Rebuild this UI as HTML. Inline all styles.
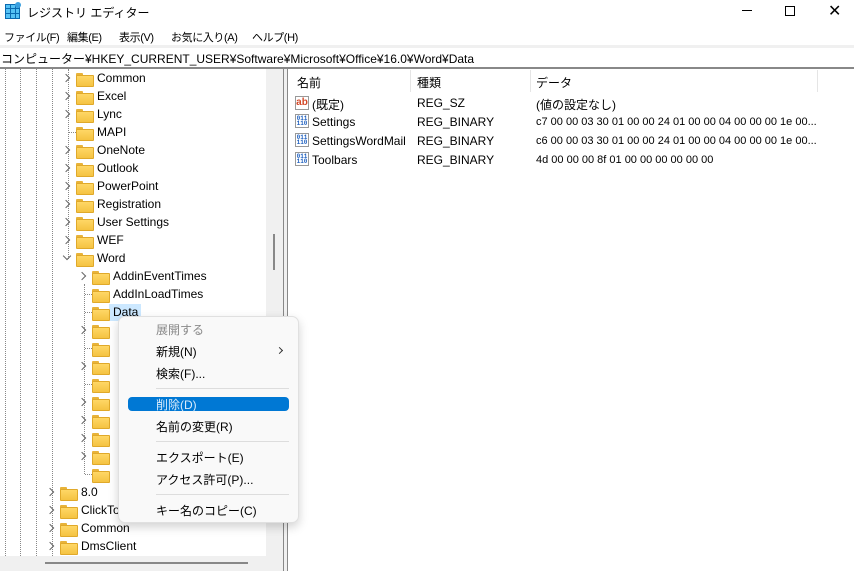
<!DOCTYPE html>
<html><head><meta charset="utf-8"><style>
*{margin:0;padding:0;box-sizing:border-box}
body{width:854px;height:571px;overflow:hidden;background:#fff;font-family:"Liberation Sans","Noto Sans CJK JP",sans-serif;font-size:12px;color:#000;position:relative}
.a{position:absolute;white-space:nowrap}
.mn{position:absolute;white-space:nowrap;font-size:11px;letter-spacing:-0.4px;top:29px}
.f{position:absolute;width:16px;height:12px}
.f:before{content:"";position:absolute;left:0;top:0;width:7px;height:3px;background:#e8b33a;border-radius:1px 1px 0 0}
.f:after{content:"";position:absolute;left:0;top:2px;width:16px;height:10px;background:linear-gradient(#ffd766,#f5c342);border:1px solid #e0a92a;border-radius:1px}
.c{position:absolute;width:6px;height:6px;border-right:1.5px solid #666;border-bottom:1.5px solid #666;transform:rotate(-45deg)}
.cd{transform:rotate(45deg)}
.v{position:absolute;top:69px;height:487px;border-left:1px dotted #888}
.m{position:absolute;left:156px;font-size:12px}
.sep{position:absolute;left:156px;width:133px;height:1px;background:#ddd}
.bi{position:absolute;width:14px;height:14px;border:1px solid #999;background:#fff;font:bold 6px/5px "Liberation Mono",monospace;color:#1d5fbf;text-align:center;padding-top:1px}
</style></head><body>
<!-- title -->
<div class="a" style="left:5px;top:4px;width:15px;height:15px;background:#1e8fd8;border:1px solid #0a6ab0"></div>
<div class="a" style="left:6px;top:5px;width:13px;height:13px;background:repeating-linear-gradient(90deg,transparent 0 4px,#0a6ab0 4px 5px),repeating-linear-gradient(0deg,#55c2f5 0 4px,#0a6ab0 4px 5px)"></div>
<div class="a" style="left:15px;top:2px;width:6px;height:6px;background:#3aa0e0;border-radius:50%"></div>
<div class="a" style="left:27px;top:4px;font-size:12px">レジストリ エディター</div>
<div class="a" style="left:742px;top:10px;width:10px;height:1px;background:#000"></div>
<div class="a" style="left:785px;top:6px;width:10px;height:10px;border:1px solid #000"></div>
<div class="a" style="left:828px;top:1px;font-size:16px;font-weight:300">✕</div>
<!-- menu -->
<div class="mn" style="left:4px">ファイル(F)</div>
<div class="mn" style="left:67px">編集(E)</div>
<div class="mn" style="left:119px">表示(V)</div>
<div class="mn" style="left:171px">お気に入り(A)</div>
<div class="mn" style="left:252px">ヘルプ(H)</div>
<div class="a" style="left:0;top:45px;width:854px;height:3px;background:#f0f0f0"></div>
<div class="a" style="left:1px;top:50px">コンピューター¥HKEY_CURRENT_USER¥Software¥Microsoft¥Office¥16.0¥Word¥Data</div>
<div class="a" style="left:0;top:67px;width:854px;height:2px;background:#888"></div>
<!-- tree bg & scrollbars -->
<div class="a" style="left:266px;top:69px;width:17px;height:502px;background:#f0f0f0"></div>
<div class="a" style="left:273px;top:234px;width:2px;height:36px;background:#888"></div>
<div class="a" style="left:0;top:556px;width:283px;height:15px;background:#f0f0f0"></div>
<div class="a" style="left:45px;top:562px;width:203px;height:2px;background:#888"></div>
<div class="a" style="left:283px;top:69px;width:1px;height:502px;background:#888"></div>
<div class="a" style="left:284px;top:69px;width:3px;height:502px;background:#f0f0f0"></div>
<div class="a" style="left:287px;top:69px;width:1px;height:502px;background:#888"></div>
<div class="v" style="left:5px"></div><div class="v" style="left:20px"></div><div class="v" style="left:36px"></div><div class="v" style="left:52px"></div>
<div class="v" style="left:68px;height:190px"></div>
<div class="a" style="left:84px;top:284px;height:190px;border-left:1px dotted #888"></div>
<div class="a" style="left:69px;top:132px;width:7px;border-top:1px dotted #888"></div>
<div class="a" style="left:85px;top:294px;width:7px;border-top:1px dotted #888"></div>
<div class="a" style="left:85px;top:312px;width:7px;border-top:1px dotted #888"></div>
<div class="a" style="left:85px;top:348px;width:7px;border-top:1px dotted #888"></div>
<div class="a" style="left:85px;top:384px;width:7px;border-top:1px dotted #888"></div>
<div class="a" style="left:85px;top:474px;width:7px;border-top:1px dotted #888"></div>
<div class="a" style="left:109px;top:304px;width:32px;height:17px;background:#cce8ff"></div>

<!-- level office children -->
<div class="c" style="left:63px;top:75px"></div><div class="f" style="left:76px;top:73px"></div><div class="a" style="left:97px;top:71px">Common</div>
<div class="c" style="left:63px;top:93px"></div><div class="f" style="left:76px;top:91px"></div><div class="a" style="left:97px;top:89px">Excel</div>
<div class="c" style="left:63px;top:111px"></div><div class="f" style="left:76px;top:109px"></div><div class="a" style="left:97px;top:107px">Lync</div>
<div class="f" style="left:76px;top:127px"></div><div class="a" style="left:97px;top:125px">MAPI</div>
<div class="c" style="left:63px;top:147px"></div><div class="f" style="left:76px;top:145px"></div><div class="a" style="left:97px;top:143px">OneNote</div>
<div class="c" style="left:63px;top:165px"></div><div class="f" style="left:76px;top:163px"></div><div class="a" style="left:97px;top:161px">Outlook</div>
<div class="c" style="left:63px;top:183px"></div><div class="f" style="left:76px;top:181px"></div><div class="a" style="left:97px;top:179px">PowerPoint</div>
<div class="c" style="left:63px;top:201px"></div><div class="f" style="left:76px;top:199px"></div><div class="a" style="left:97px;top:197px">Registration</div>
<div class="c" style="left:63px;top:219px"></div><div class="f" style="left:76px;top:217px"></div><div class="a" style="left:97px;top:215px">User Settings</div>
<div class="c" style="left:63px;top:237px"></div><div class="f" style="left:76px;top:235px"></div><div class="a" style="left:97px;top:233px">WEF</div>
<div class="c cd" style="left:64px;top:253px"></div><div class="f" style="left:76px;top:253px"></div><div class="a" style="left:97px;top:251px">Word</div>
<!-- word children -->
<div class="c" style="left:79px;top:273px"></div><div class="f" style="left:92px;top:271px"></div><div class="a" style="left:113px;top:269px">AddinEventTimes</div>
<div class="f" style="left:92px;top:289px"></div><div class="a" style="left:113px;top:287px">AddInLoadTimes</div>
<div class="f" style="left:92px;top:307px"></div><div class="a" style="left:113px;top:305px">Data</div>
<div class="c" style="left:79px;top:327px"></div><div class="f" style="left:92px;top:325px"></div>
<div class="f" style="left:92px;top:343px"></div>
<div class="c" style="left:79px;top:363px"></div><div class="f" style="left:92px;top:361px"></div>
<div class="f" style="left:92px;top:379px"></div>
<div class="c" style="left:79px;top:399px"></div><div class="f" style="left:92px;top:397px"></div>
<div class="c" style="left:79px;top:417px"></div><div class="f" style="left:92px;top:415px"></div>
<div class="c" style="left:79px;top:435px"></div><div class="f" style="left:92px;top:433px"></div>
<div class="c" style="left:79px;top:453px"></div><div class="f" style="left:92px;top:451px"></div>
<div class="f" style="left:92px;top:469px"></div>
<!-- lower -->
<div class="c" style="left:47px;top:489px"></div><div class="f" style="left:60px;top:487px"></div><div class="a" style="left:81px;top:485px">8.0</div>
<div class="c" style="left:47px;top:507px"></div><div class="f" style="left:60px;top:505px"></div><div class="a" style="left:81px;top:503px">ClickTo</div>
<div class="c" style="left:47px;top:525px"></div><div class="f" style="left:60px;top:523px"></div><div class="a" style="left:81px;top:521px">Common</div>
<div class="c" style="left:47px;top:543px"></div><div class="f" style="left:60px;top:541px"></div><div class="a" style="left:81px;top:539px">DmsClient</div>

<!-- right pane -->
<div class="a" style="left:297px;top:74px">名前</div>
<div class="a" style="left:410px;top:70px;width:1px;height:22px;background:#e5e5e5"></div>
<div class="a" style="left:417px;top:74px">種類</div>
<div class="a" style="left:530px;top:70px;width:1px;height:22px;background:#e5e5e5"></div>
<div class="a" style="left:536px;top:74px">データ</div>
<div class="a" style="left:817px;top:70px;width:1px;height:22px;background:#e5e5e5"></div>
<div class="a" style="left:295px;top:96px;width:14px;height:14px;border:1px solid #999;background:#fff;color:#d24726;font:bold 10px/11px 'Liberation Sans',sans-serif;text-align:center">ab</div>
<div class="a" style="left:312px;top:96px">(既定)</div>
<div class="a" style="left:417px;top:96px">REG_SZ</div>
<div class="a" style="left:536px;top:96px">(値の設定なし)</div>
<div class="bi" style="left:295px;top:114px">011<br>110</div><div class="a" style="left:312px;top:115px">Settings</div>
<div class="a" style="left:417px;top:115px">REG_BINARY</div>
<div class="a" style="left:536px;top:116px;font-size:11px">c7 00 00 03 30 01 00 00 24 01 00 00 04 00 00 00 1e 00...</div>
<div class="bi" style="left:295px;top:133px">011<br>110</div><div class="a" style="left:312px;top:134px">SettingsWordMail</div>
<div class="a" style="left:417px;top:134px">REG_BINARY</div>
<div class="a" style="left:536px;top:135px;font-size:11px">c6 00 00 03 30 01 00 00 24 01 00 00 04 00 00 00 1e 00...</div>
<div class="bi" style="left:295px;top:152px">011<br>110</div><div class="a" style="left:312px;top:153px">Toolbars</div>
<div class="a" style="left:417px;top:153px">REG_BINARY</div>
<div class="a" style="left:536px;top:154px;font-size:11px">4d 00 00 00 8f 01 00 00 00 00 00 00</div>

<!-- context menu -->
<div class="a" style="left:118px;top:316px;width:181px;height:207px;background:#f9f9f9;border:1px solid #e0e0e0;border-radius:7px;box-shadow:0 4px 10px rgba(0,0,0,.18)"></div>
<div class="m" style="top:321px;color:#8a8a8a">展開する</div>
<div class="m" style="top:343px">新規(N)</div>
<div class="c" style="left:277px;top:348px;border-color:#333;width:5px;height:5px;border-width:1.2px"></div>
<div class="m" style="top:365px">検索(F)...</div>
<div class="sep" style="top:388px"></div>
<div class="a" style="left:128px;top:397px;width:161px;height:14px;background:#0078d4;border-radius:4px"></div>
<div class="m" style="top:396px;color:#d8ebfb">削除(D)</div>
<div class="m" style="top:418px">名前の変更(R)</div>
<div class="sep" style="top:441px"></div>
<div class="m" style="top:449px">エクスポート(E)</div>
<div class="m" style="top:471px">アクセス許可(P)...</div>
<div class="sep" style="top:494px"></div>
<div class="m" style="top:502px">キー名のコピー(C)</div>
</body></html>
